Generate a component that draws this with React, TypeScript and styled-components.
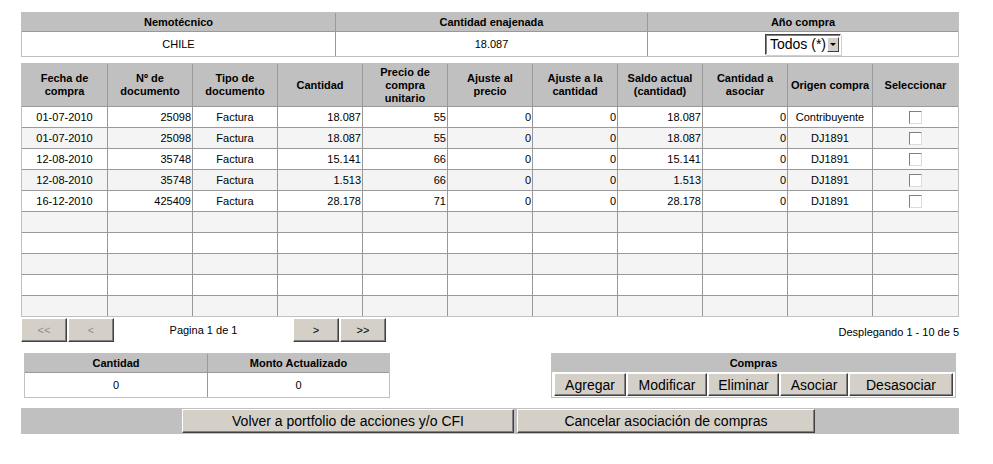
import React from 'react';
import styled, { createGlobalStyle } from 'styled-components';

const GlobalStyle = createGlobalStyle`
  * { box-sizing: border-box; }
  body {
    margin: 0;
    background: #fff;
    color: #000;
    font-family: "Liberation Sans", Arial, sans-serif;
  }
`;

const Page = styled.div`
  width: 959px;
  padding: 12px 0 0 21px;
`;

const Grid = styled.table<{ $width?: number; $mt?: number }>`
  width: ${p => (p.$width ? `${p.$width}px` : '100%')};
  margin-top: ${p => p.$mt ?? 0}px;
  border-collapse: separate;
  border-spacing: 0;
  border: 1px solid #c0c0c0;
  table-layout: fixed;
`;

const Th = styled.th<{ $h: number }>`
  height: ${p => p.$h}px;
  padding: 0 2px;
  background: #c0c0c0;
  font-size: 11px;
  font-weight: bold;
  line-height: 13px;
  text-align: center;
  vertical-align: middle;
  white-space: nowrap;
  & + & {
    border-left: 1px solid #999;
  }
`;

const Td = styled.td<{ $h: number; $align?: string }>`
  height: ${p => p.$h}px;
  padding: 0 1px;
  border-top: 1px solid #999;
  font-size: 11px;
  text-align: ${p => p.$align ?? 'center'};
  vertical-align: middle;
  white-space: nowrap;
  overflow: hidden;
  & + & {
    border-left: 1px solid #999;
  }
`;

const Tr = styled.tr<{ $alt?: boolean }>`
  background: ${p => (p.$alt ? '#f4f4f4' : '#fff')};
`;

const FakeSelect = styled.span`
  display: inline-flex;
  align-items: center;
  width: 76px;
  height: 21px;
  padding: 0 1px 0 4px;
  border: 1px solid;
  border-color: #404040 #fff #fff #404040;
  box-shadow: inset 1px 1px 0 #808080, 1px 1px 0 #d4d0c8;
  background: #fff;
  font-size: 14px;
  vertical-align: middle;
`;

const SelectArrow = styled.span`
  margin-left: auto;
  width: 12px;
  height: 15px;
  display: flex;
  align-items: center;
  justify-content: center;
  background: #d4d0c8;
  border: 1px solid;
  border-color: #fff #404040 #404040 #fff;
  &::after {
    content: '';
    border-left: 3px solid transparent;
    border-right: 3px solid transparent;
    border-top: 3px solid #000;
  }
`;

const CheckBox = styled.span`
  display: inline-block;
  width: 13px;
  height: 13px;
  border: 1px solid;
  border-color: #808080 #dcdcdc #dcdcdc #808080;
  background: #fff;
  vertical-align: middle;
`;

const Pager = styled.div`
  display: flex;
  align-items: center;
  gap: 1px;
  height: 24px;
  margin-top: 1px;
`;

const WinButton = styled.button<{ $w: number; $h: number; $size?: number; $muted?: boolean }>`
  width: ${p => p.$w}px;
  height: ${p => p.$h}px;
  padding: 0;
  background: #d4d0c8;
  border: 1px solid;
  border-color: #fff #404040 #404040 #fff;
  box-shadow: inset -1px -1px 0 #808080;
  font-family: "Liberation Sans", Arial, sans-serif;
  font-size: ${p => p.$size ?? 11}px;
  color: ${p => (p.$muted ? '#8c8c8c' : '#000')};
  cursor: default;
  white-space: nowrap;
`;

const PageLabel = styled.span`
  width: 177px;
  text-align: center;
  font-size: 11px;
`;

const PagerInfo = styled.span`
  margin-left: auto;
  font-size: 11px;
  padding-top: 4px;
`;

const SummaryRow = styled.div`
  display: flex;
  justify-content: space-between;
  align-items: flex-start;
  margin-top: 11px;
  padding: 0 3px;
`;

const ComprasBox = styled.div`
  width: 405px;
  border: 1px solid #c0c0c0;
`;

const ComprasTitle = styled.div`
  height: 18px;
  line-height: 18px;
  background: #c0c0c0;
  font-size: 11px;
  font-weight: bold;
  text-align: center;
`;

const ComprasButtons = styled.div`
  display: flex;
  gap: 1px;
  padding: 1px 2px;
`;

const BottomBar = styled.div`
  display: flex;
  align-items: center;
  gap: 3px;
  height: 26px;
  margin-top: 10px;
  padding-left: 161px;
  background: #c0c0c0;
`;

type Row = string[];

const rows: Row[] = [
  ['01-07-2010', '25098', 'Factura', '18.087', '55', '0', '0', '18.087', '0', 'Contribuyente'],
  ['01-07-2010', '25098', 'Factura', '18.087', '55', '0', '0', '18.087', '0', 'DJ1891'],
  ['12-08-2010', '35748', 'Factura', '15.141', '66', '0', '0', '15.141', '0', 'DJ1891'],
  ['12-08-2010', '35748', 'Factura', '1.513', '66', '0', '0', '1.513', '0', 'DJ1891'],
  ['16-12-2010', '425409', 'Factura', '28.178', '71', '0', '0', '28.178', '0', 'DJ1891'],
];

const headers: React.ReactNode[] = [
  <>Fecha de<br />compra</>,
  <>Nº de<br />documento</>,
  <>Tipo de<br />documento</>,
  'Cantidad',
  <>Precio de<br />compra<br />unitario</>,
  <>Ajuste al<br />precio</>,
  <>Ajuste a la<br />cantidad</>,
  <>Saldo actual<br />(cantidad)</>,
  <>Cantidad a<br />asociar</>,
  'Origen compra',
  'Seleccionar',
];

const aligns = ['center', 'right', 'center', 'right', 'right', 'right', 'right', 'right', 'right', 'center'];
const colWidths = [85, 85, 85, 85, 85, 85, 85, 85, 85, 85, 86];

const compraButtons: [string, number][] = [
  ['Agregar', 72],
  ['Modificar', 80],
  ['Eliminar', 71],
  ['Asociar', 68],
  ['Desasociar', 104],
];

const App = () => {
  const blanks = Array.from({ length: 10 - rows.length }, () => null);

  return (
    <Page>
      <GlobalStyle />
      <Grid>
        <colgroup>
          <col style={{ width: 313 }} />
          <col style={{ width: 312 }} />
          <col style={{ width: 311 }} />
        </colgroup>
        <thead>
          <tr>
            <Th $h={18}>Nemotécnico</Th>
            <Th $h={18}>Cantidad enajenada</Th>
            <Th $h={18}>Año compra</Th>
          </tr>
        </thead>
        <tbody>
          <Tr>
            <Td $h={25}>CHILE</Td>
            <Td $h={25}>18.087</Td>
            <Td $h={25}>
              <FakeSelect>
                Todos (*)
                <SelectArrow />
              </FakeSelect>
            </Td>
          </Tr>
        </tbody>
      </Grid>

      <Grid $mt={6}>
        <colgroup>
          {colWidths.map((w, i) => (
            <col key={i} style={{ width: w }} />
          ))}
        </colgroup>
        <thead>
          <tr>
            {headers.map((h, i) => (
              <Th key={i} $h={42}>
                {h}
              </Th>
            ))}
          </tr>
        </thead>
        <tbody>
          {rows.map((row, r) => (
            <Tr key={r} $alt={r % 2 === 1}>
              {row.map((cell, c) => (
                <Td key={c} $h={21} $align={aligns[c]}>
                  {cell}
                </Td>
              ))}
              <Td $h={21}>
                <CheckBox />
              </Td>
            </Tr>
          ))}
          {blanks.map((_, i) => (
            <Tr key={`b${i}`} $alt={(rows.length + i) % 2 === 1}>
              {colWidths.map((_, c) => (
                <Td key={c} $h={21} />
              ))}
            </Tr>
          ))}
        </tbody>
      </Grid>

      <Pager>
        <WinButton $w={46} $h={24} $muted>&lt;&lt;</WinButton>
        <WinButton $w={46} $h={24} $muted>&lt;</WinButton>
        <PageLabel>Pagina 1 de 1</PageLabel>
        <WinButton $w={46} $h={24}>&gt;</WinButton>
        <WinButton $w={46} $h={24}>&gt;&gt;</WinButton>
        <PagerInfo>Desplegando 1 - 10 de 5</PagerInfo>
      </Pager>

      <SummaryRow>
        <Grid $width={366}>
          <thead>
            <tr>
              <Th $h={18}>Cantidad</Th>
              <Th $h={18}>Monto Actualizado</Th>
            </tr>
          </thead>
          <tbody>
            <Tr>
              <Td $h={25}>0</Td>
              <Td $h={25}>0</Td>
            </Tr>
          </tbody>
        </Grid>

        <ComprasBox>
          <ComprasTitle>Compras</ComprasTitle>
          <ComprasButtons>
            {compraButtons.map(([label, w]) => (
              <WinButton key={label} $w={w} $h={23} $size={14}>
                {label}
              </WinButton>
            ))}
          </ComprasButtons>
        </ComprasBox>
      </SummaryRow>

      <BottomBar>
        <WinButton $w={332} $h={24} $size={14}>
          Volver a portfolio de acciones y/o CFI
        </WinButton>
        <WinButton $w={298} $h={24} $size={14}>
          Cancelar asociación de compras
        </WinButton>
      </BottomBar>
    </Page>
  );
};

export default App;
